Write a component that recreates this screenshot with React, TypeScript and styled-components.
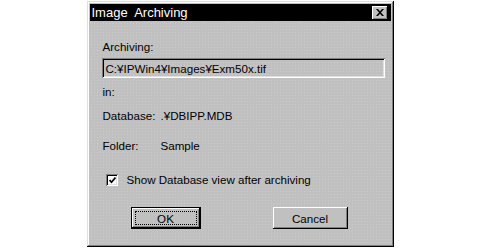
import styled, { createGlobalStyle } from "styled-components";

const GlobalStyle = createGlobalStyle`
  html, body {
    margin: 0;
    padding: 0;
    background: #ffffff;
  }
  body {
    font-family: "Liberation Sans", Arial, sans-serif;
    font-size: 11.6px;
    color: #000000;
  }
`;

const Page = styled.div`
  width: 480px;
  height: 251px;
  display: flex;
  justify-content: center;
  padding-top: 1px;
  box-sizing: border-box;
`;

const Dialog = styled.div`
  width: 307px;
  height: 246px;
  box-sizing: border-box;
  padding: 3px;
  display: flex;
  flex-direction: column;
  background-color: #c0c0c0;
  background-image: radial-gradient(#cbcbcb 0.6px, transparent 0.8px);
  background-size: 3px 3px;
  box-shadow: inset -1px -1px #000000, inset 1px 1px #dfdfdf,
    inset -2px -2px #808080, inset 2px 2px #ffffff;
`;

const TitleBar = styled.div`
  height: 17px;
  background: #000000;
  color: #ffffff;
  display: flex;
  align-items: center;
  justify-content: space-between;
  padding: 0 3px 0 2px;
  font-size: 13px;
  white-space: pre;
`;

const CloseButton = styled.div`
  width: 16px;
  height: 14px;
  box-sizing: border-box;
  background: #c0c0c0;
  display: flex;
  align-items: center;
  justify-content: center;
  box-shadow: inset -1px -1px #000000, inset 1px 1px #ffffff,
    inset -2px -2px #808080;
`;

const Body = styled.div`
  display: flex;
  flex-direction: column;
  padding: 19px 6px 0 12px;
`;

const Label = styled.div<{ $gap?: number }>`
  line-height: 14px;
  height: 14px;
  padding-left: 1px;
  margin-top: ${(p) => p.$gap ?? 0}px;
`;

const PathBox = styled.div`
  margin-top: 4px;
  width: 283px;
  height: 20px;
  box-sizing: border-box;
  display: flex;
  align-items: center;
  padding-left: 4px;
  box-shadow: inset 1px 1px #808080, inset -1px -1px #ffffff,
    inset 2px 2px #000000, inset -2px -2px #dfdfdf;
`;

const InfoRow = styled.div<{ $gap: number }>`
  display: grid;
  grid-template-columns: 58px auto;
  line-height: 14px;
  padding-left: 1px;
  margin-top: ${(p) => p.$gap}px;
`;

const CheckRow = styled.label`
  display: flex;
  align-items: center;
  gap: 9px;
  margin-top: 20px;
  padding-left: 4px;
  line-height: 14px;
`;

const CheckBox = styled.span`
  width: 12px;
  height: 12px;
  box-sizing: border-box;
  background: #ffffff;
  display: flex;
  align-items: center;
  justify-content: center;
  padding: 1px 0 0 1px;
  box-shadow: inset 1px 1px #808080, inset -1px -1px #ffffff,
    inset 2px 2px #000000, inset -2px -2px #dfdfdf;
`;

const ButtonRow = styled.div`
  display: flex;
  gap: 72px;
  margin-top: 20px;
  padding-left: 29px;
`;

const Button = styled.div<{ $default?: boolean; $w: number }>`
  width: ${(p) => p.$w}px;
  height: 22px;
  box-sizing: border-box;
  display: flex;
  align-items: center;
  justify-content: center;
  position: relative;
  background: #c0c0c0;
  box-shadow: ${(p) =>
    p.$default
      ? "inset -1px -1px #000, inset 1px 1px #000, inset -2px -2px #000, inset 2px 2px #fff, inset -3px -3px #808080"
      : "inset -1px -1px #000, inset 1px 1px #fff, inset -2px -2px #808080"};
`;

const FocusRing = styled.span`
  position: absolute;
  inset: 4px;
  border: 1px dotted #000000;
`;

export default function App() {
  return (
    <Page>
      <GlobalStyle />
      <Dialog>
        <TitleBar>
          <span>Image  Archiving</span>
          <CloseButton>
            <svg width="8" height="7" viewBox="0 0 8 7">
              <path d="M0 0h2l2 2.2 2-2.2h2l-3 3.5 3 3.5h-2l-2-2.2-2 2.2h-2l3-3.5z" fill="#000" />
            </svg>
          </CloseButton>
        </TitleBar>
        <Body>
          <Label>Archiving:</Label>
          <PathBox>C:¥IPWin4¥Images¥Exm50x.tif</PathBox>
          <Label $gap={7}>in:</Label>
          <InfoRow $gap={10}>
            <span>Database:</span>
            <span>.¥DBIPP.MDB</span>
          </InfoRow>
          <InfoRow $gap={16}>
            <span>Folder:</span>
            <span>Sample</span>
          </InfoRow>
          <CheckRow>
            <CheckBox>
              <svg width="7" height="7" viewBox="0 0 7 7">
                <path d="M0.5 3l2 2.3 4-4.8" stroke="#000" strokeWidth="1.7" fill="none" />
              </svg>
            </CheckBox>
            <span>Show Database view after archiving</span>
          </CheckRow>
          <ButtonRow>
            <Button $default $w={70}>
              <FocusRing />
              OK
            </Button>
            <Button $w={75}>Cancel</Button>
          </ButtonRow>
        </Body>
      </Dialog>
    </Page>
  );
}
